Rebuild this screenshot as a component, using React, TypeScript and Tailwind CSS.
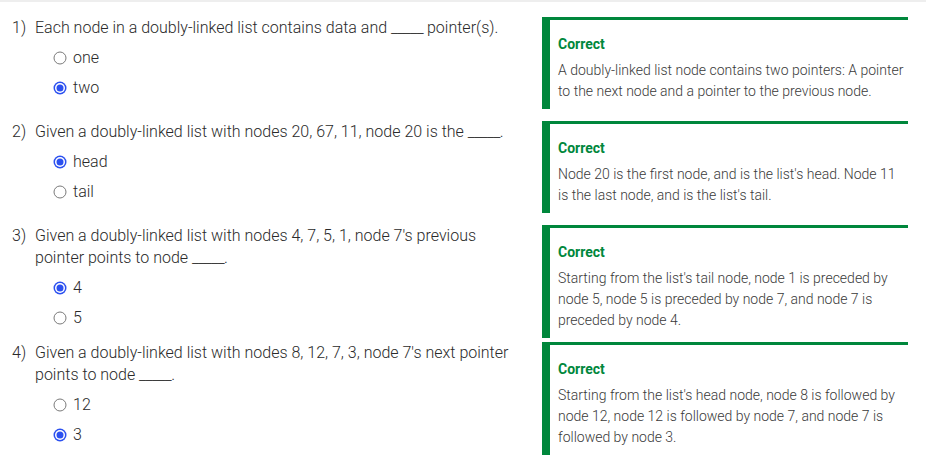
import React from "react";

type Opcao = { texto: string; marcada: boolean };
type Questao = {
  num: string;
  pergunta: React.ReactNode;
  opcoes: Opcao[];
  explicacao: string;
  altura: string;
};

const lacuna = <span className="tracking-[-0.5px]">_____</span>;

const questoes: Questao[] = [
  {
    num: "1)",
    pergunta: <>Each node in a doubly-linked list contains data and {lacuna} pointer(s).</>,
    opcoes: [
      { texto: "one", marcada: false },
      { texto: "two", marcada: true },
    ],
    explicacao: "A doubly-linked list node contains two pointers: A pointer to the next node and a pointer to the previous node.",
    altura: "h-[104px]",
  },
  {
    num: "2)",
    pergunta: <>Given a doubly-linked list with nodes 20, 67, 11, node 20 is the {lacuna}.</>,
    opcoes: [
      { texto: "head", marcada: true },
      { texto: "tail", marcada: false },
    ],
    explicacao: "Node 20 is the first node, and is the list's head. Node 11 is the last node, and is the list's tail.",
    altura: "h-[104px]",
  },
  {
    num: "3)",
    pergunta: <>Given a doubly-linked list with nodes 4, 7, 5, 1, node 7's previous pointer points to node {lacuna}.</>,
    opcoes: [
      { texto: "4", marcada: true },
      { texto: "5", marcada: false },
    ],
    explicacao: "Starting from the list's tail node, node 1 is preceded by node 5, node 5 is preceded by node 7, and node 7 is preceded by node 4.",
    altura: "h-[117px]",
  },
  {
    num: "4)",
    pergunta: <>Given a doubly-linked list with nodes 8, 12, 7, 3, node 7's next pointer points to node {lacuna}.</>,
    opcoes: [
      { texto: "12", marcada: false },
      { texto: "3", marcada: true },
    ],
    explicacao: "Starting from the list's head node, node 8 is followed by node 12, node 12 is followed by node 7, and node 7 is followed by node 3.",
    altura: "h-[117px]",
  },
];

function Radio({ marcada }: { marcada: boolean }) {
  return (
    <svg width="14" height="14" viewBox="0 0 14 14" className="shrink-0">
      {marcada ? (
        <>
          <circle cx="7" cy="7" r="6.5" fill="#2b50f0" />
          <circle cx="7" cy="7" r="5" fill="#ffffff" />
          <circle cx="7" cy="7" r="3.5" fill="#2b50f0" />
        </>
      ) : (
        <circle cx="7" cy="7" r="6" fill="#ffffff" stroke="#7a7a7a" strokeWidth="1" />
      )}
    </svg>
  );
}

export default function App() {
  return (
    <div className="w-[928px] h-[459px] bg-white overflow-hidden font-['Roboto',sans-serif] font-light">
      {/* faixa cinza do topo */}
      <div className="h-[2px] bg-[#eeeeee] mr-[2px]" />

      <div className="pt-[15px] pl-[12px]">
        {questoes.map((q) => (
          <div key={q.num} className={`flex items-start ${q.altura}`}>
            {/* pergunta + alternativas */}
            <div className="w-[530px] shrink-0">
              <div className="flex text-[16px] leading-[22px] text-[#2a2a2a]">
                <span className="w-[23px] shrink-0">{q.num}</span>
                <p className="w-[482px]">{q.pergunta}</p>
              </div>
              <div className="mt-[4px] pl-[41px]">
                {q.opcoes.map((o) => (
                  <div key={o.texto} className="flex items-center h-[30px] gap-[6px] text-[16px] text-[#2a2a2a]">
                    <Radio marcada={o.marcada} />
                    <span>{o.texto}</span>
                  </div>
                ))}
              </div>
            </div>

            {/* feedback */}
            <div className="w-[366px] border-t-[3px] border-l-[8px] border-[#00873c] pt-[14px] pb-[7px] pl-[8px] pr-0">
              <p className="text-[14px] leading-5 font-bold text-[#00873c]">Correct</p>
              <p className="mt-[6px] text-[14px] leading-[21px] text-[#3a3a3a]">{q.explicacao}</p>
            </div>
          </div>
        ))}
      </div>
    </div>
  );
}
